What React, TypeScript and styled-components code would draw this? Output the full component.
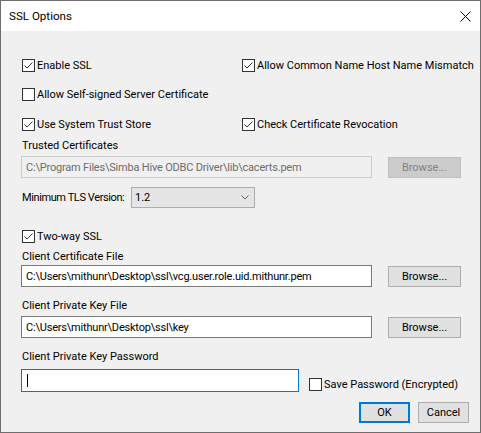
import React from 'react';
import styled, { createGlobalStyle } from 'styled-components';

const Global = createGlobalStyle`
  html, body { margin: 0; padding: 0; background: #ffffff; }
  body {
    font-family: Roboto, "Noto Sans", "Liberation Sans", sans-serif;
    font-size: 11px;
    color: #000000;
  }
  * { box-sizing: border-box; }
`;

const Window = styled.div`
  width: 481px;
  height: 433px;
  border: 1px solid #6e6e6e;
  background: #f0f0f0;
  display: flex;
  flex-direction: column;
`;

const TitleBar = styled.div`
  height: 30px;
  background: #ffffff;
  display: flex;
  align-items: center;
  justify-content: space-between;
  padding: 0 9px 0 8px;
`;

const Title = styled.span`
  font-size: 11.6px;
  line-height: 16px;
`;

const Body = styled.div`
  flex: 1;
  display: flex;
  flex-direction: column;
  padding: 24px 0 0 20px;
`;

const CheckRow = styled.div<{ $mt?: number }>`
  display: grid;
  grid-template-columns: 220px 1fr;
  height: 20px;
  align-items: center;
  padding-left: 1px;
  margin-top: ${(p) => p.$mt ?? 0}px;
`;

const CheckLabel = styled.label<{ $alignEnd?: boolean }>`
  display: flex;
  align-items: center;
  gap: 2px;
  height: 16px;
  white-space: nowrap;
  ${(p) => (p.$alignEnd ? 'align-self: flex-end;' : '')}
`;

const Box = styled.span`
  width: 13px;
  height: 13px;
  border: 1px solid #333333;
  background: #ffffff;
  display: flex;
  align-items: center;
  justify-content: center;
  flex: none;
`;

const FieldLabel = styled.div<{ $mt: number }>`
  height: 16px;
  line-height: 16px;
  padding-left: 1px;
  margin-top: ${(p) => p.$mt}px;
`;

const FieldRow = styled.div<{ $mt: number; $h: number }>`
  display: flex;
  align-items: center;
  gap: 16px;
  height: ${(p) => p.$h}px;
  margin-top: ${(p) => p.$mt}px;
`;

const TextBox = styled.div<{ $disabled?: boolean; $focused?: boolean; $w: number; $h: number }>`
  width: ${(p) => p.$w}px;
  height: ${(p) => p.$h}px;
  border: 1px solid ${(p) => (p.$focused ? '#0078d7' : p.$disabled ? '#cccccc' : '#7a7a7a')};
  background: ${(p) => (p.$disabled ? '#f0f0f0' : '#ffffff')};
  color: ${(p) => (p.$disabled ? '#6d6d6d' : '#000000')};
  padding-left: 4px;
  display: flex;
  align-items: center;
  white-space: nowrap;
  overflow: hidden;
  letter-spacing: -0.2px;
  flex: none;
`;

const Caret = styled.span`
  width: 1px;
  height: 13px;
  background: #000000;
  margin-left: 1px;
`;

const Button = styled.button<{ $w: number; $default?: boolean }>`
  width: ${(p) => p.$w}px;
  height: 21px;
  font: inherit;
  font-size: 11px;
  padding: 0;
  background: #e1e1e1;
  color: #000000;
  border: ${(p) => (p.$default ? '2px solid #0078d7' : '1px solid #adadad')};
  flex: none;
  &:disabled {
    background: #cccccc;
    border-color: #bfbfbf;
    color: #838383;
  }
`;

const TlsRow = styled.div`
  display: flex;
  align-items: center;
  height: 21px;
  margin-top: 9px;
  padding-left: 1px;
`;

const TlsLabel = styled.span`
  width: 109px;
  white-space: nowrap;
  letter-spacing: -0.4px;
`;

const Select = styled.div`
  width: 124px;
  height: 21px;
  background: #e5e5e5;
  border: 1px solid #acacac;
  display: flex;
  align-items: center;
  justify-content: space-between;
  padding: 0 5px 0 3px;
`;

const PasswordRow = styled.div`
  display: flex;
  height: 23px;
  gap: 10px;
  margin-top: 4px;
`;

const ButtonRow = styled.div`
  display: flex;
  justify-content: flex-end;
  gap: 8px;
  margin-top: 10px;
  padding-right: 11px;
`;

const CheckMark = () => (
  <svg width="11" height="11" viewBox="0 0 11 11">
    <polyline points="1.5,5.5 4,8 9.5,2.5" fill="none" stroke="#333333" strokeWidth="1" />
  </svg>
);

const Check = ({ checked, label, alignEnd }: { checked?: boolean; label: string; alignEnd?: boolean }) => (
  <CheckLabel $alignEnd={alignEnd}>
    <Box>{checked && <CheckMark />}</Box>
    <span>{label}</span>
  </CheckLabel>
);

const CloseIcon = () => (
  <svg width="11" height="11" viewBox="0 0 11 11">
    <path d="M0.5 0.5 L10.5 10.5 M10.5 0.5 L0.5 10.5" stroke="#000000" strokeWidth="1" />
  </svg>
);

const Chevron = () => (
  <svg width="8" height="5" viewBox="0 0 8 5">
    <polyline points="0.5,0.5 4,4 7.5,0.5" fill="none" stroke="#606060" strokeWidth="1" />
  </svg>
);

export default function App() {
  return (
    <>
      <Global />
      <Window>
        <TitleBar>
          <Title>SSL Options</Title>
          <CloseIcon />
        </TitleBar>
        <Body>
          <CheckRow>
            <Check checked label="Enable SSL" />
            <Check checked label="Allow Common Name Host Name Mismatch" />
          </CheckRow>
          <CheckRow $mt={9}>
            <Check label="Allow Self-signed Server Certificate" />
          </CheckRow>
          <CheckRow $mt={10}>
            <Check checked label="Use System Trust Store" />
            <Check checked label="Check Certificate Revocation" />
          </CheckRow>

          <FieldLabel $mt={4}>Trusted Certificates</FieldLabel>
          <FieldRow $mt={2} $h={22}>
            <TextBox $disabled $w={351} $h={22}>
              C:\Program Files\Simba Hive ODBC Driver\lib\cacerts.pem
            </TextBox>
            <Button $w={73} disabled>
              Browse...
            </Button>
          </FieldRow>

          <TlsRow>
            <TlsLabel>Minimum TLS Version:</TlsLabel>
            <Select>
              <span>1.2</span>
              <Chevron />
            </Select>
          </TlsRow>

          <CheckRow $mt={18}>
            <Check checked label="Two-way SSL" />
          </CheckRow>

          <FieldLabel $mt={3}>Client Certificate File</FieldLabel>
          <FieldRow $mt={0} $h={22}>
            <TextBox $w={351} $h={22}>
              C:\Users\mithunr\Desktop\ssl\vcg.user.role.uid.mithunr.pem
            </TextBox>
            <Button $w={73}>Browse...</Button>
          </FieldRow>

          <FieldLabel $mt={11}>Client Private Key File</FieldLabel>
          <FieldRow $mt={2} $h={22}>
            <TextBox $w={351} $h={22}>
              C:\Users\mithunr\Desktop\ssl\key
            </TextBox>
            <Button $w={73}>Browse...</Button>
          </FieldRow>

          <FieldLabel $mt={11}>Client Private Key Password</FieldLabel>
          <PasswordRow>
            <TextBox $focused $w={278} $h={23}>
              <Caret />
            </TextBox>
            <Check alignEnd label="Save Password (Encrypted)" />
          </PasswordRow>

          <ButtonRow>
            <Button $w={51} $default>
              OK
            </Button>
            <Button $w={51}>Cancel</Button>
          </ButtonRow>
        </Body>
      </Window>
    </>
  );
}
